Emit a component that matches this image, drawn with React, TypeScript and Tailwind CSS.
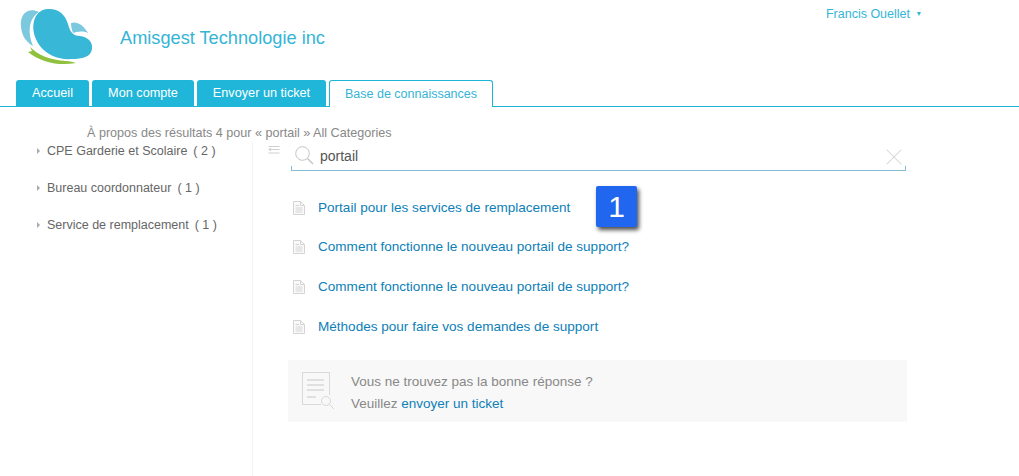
import { X } from "lucide-react";

const font = { fontFamily: '"Liberation Sans", Arial, sans-serif' };

const tabs = [
  { label: "Accueil", width: "w-[73px]" },
  { label: "Mon compte", width: "w-[102px]" },
  { label: "Envoyer un ticket", width: "w-[129px]" },
];

const categories = [
  { name: "CPE Garderie et Scolaire", count: "( 2 )" },
  { name: "Bureau coordonnateur", count: "( 1 )" },
  { name: "Service de remplacement", count: "( 1 )" },
];

const results = [
  "Portail pour les services de remplacement",
  "Comment fonctionne le nouveau portail de support?",
  "Comment fonctionne le nouveau portail de support?",
  "Méthodes pour faire vos demandes de support",
];

function Logo() {
  return (
    <svg width="74" height="58" viewBox="0 0 74 58" className="block">
      <path d="M8 3 C3 5 0 11 1 19 C2 28 6 34 13 38 C10 31 9 25 10 18 C11 12 14 7 19 4 C15 2 11 2 8 3 Z" fill="#7cc8de" />
      <path d="M27 1 C38 0 45 6 48 16 C50 24 53 28 60 28 C68 29 73 34 72 41 C71 49 62 51 52 51 C39 52 27 47 20 38 C14 30 12 21 14 13 C16 6 20 2 27 1 Z" fill="#38b7d6" />
      <path d="M51 15 C56 13 63 16 68 25 C62 22 56 24 53 25 C52 22 51 19 51 15 Z" fill="#7cc8de" />
      <path d="M10 39 C18 47 30 52 46 53 C50 53 53 54 56 55 C40 58 22 55 8 44 L12 43 Z" fill="#8fc13e" />
    </svg>
  );
}

function DocIcon() {
  return (
    <svg width="12" height="14" viewBox="0 0 12 14" fill="none" stroke="#d4d4d4" className="shrink-0">
      <path d="M0.5 0.5 H7.5 L11.5 4.5 V13.5 H0.5 Z" fill="#fafafa" />
      <path d="M7.5 0.5 V4.5 H11.5 M2.5 4.5 H6 M2.5 7 H9.5 M2.5 9 H9.5 M2.5 11 H9.5" />
    </svg>
  );
}

function TicketIcon() {
  return (
    <svg width="33" height="38" viewBox="0 0 33 38" fill="none" stroke="#d8d8d8" className="shrink-0">
      <path d="M19 32.5 H0.5 V0.5 H27.5 V23" />
      <path d="M5 8 H22 M5 13 H22 M5 18 H22 M5 25 H14" strokeWidth="1.4" />
      <circle cx="24" cy="29" r="4.5" />
      <path d="M27.5 32.5 L32 37" />
    </svg>
  );
}

function SearchGlyph() {
  return (
    <svg width="19" height="19" viewBox="0 0 19 19" fill="none" stroke="#c4c4c4" className="shrink-0">
      <circle cx="7.5" cy="7.5" r="6.8" />
      <path d="M12.5 12.5 L18 18" strokeWidth="1.4" />
    </svg>
  );
}

function IndentGlyph() {
  return (
    <svg width="12" height="8" viewBox="0 0 12 8" fill="none" stroke="#cfcfcf" className="shrink-0">
      <path d="M0.5 0.5 H11.5 M3 3.5 H11.5 M0.5 7 H11.5" />
      <path d="M0 3.5 L3 1.8 V5.2 Z" fill="#cfcfcf" stroke="none" />
    </svg>
  );
}

export default function App() {
  return (
    <div className="w-[1019px] h-[476px] overflow-hidden bg-white" style={font}>
      <header className="flex h-[80px] pl-5 pt-[8px]">
        <Logo />
        <div className="pl-[26px] pt-[19px] text-[18.2px] leading-[22px] text-[#35b5d6]">Amisgest Technologie inc</div>
        <div className="ml-auto mr-[98px] -mt-[1px] flex h-[14px] items-center gap-[7px] text-[12.5px] text-[#35b5d6]">
          Francis Ouellet
          <span className="h-0 w-0 border-x-[2.5px] border-t-[4px] border-x-transparent border-t-[#35b5d6]" />
        </div>
      </header>

      <nav className="flex h-[27px] gap-[3px] border-b border-[#1db5d8] pl-4">
        {tabs.map((tab) => (
          <div key={tab.label} className={`${tab.width} flex h-[26px] items-center justify-center rounded-t-[3px] bg-[#1fb6d9] pt-[2px] text-[12.7px] text-white`}>
            {tab.label}
          </div>
        ))}
        <div className="flex h-[27px] w-[164px] items-center justify-center rounded-t-[3px] border-x border-t border-[#1db5d8] bg-white text-[12.5px] text-[#35b5d6]">
          Base de connaissances
        </div>
      </nav>

      <div className="pl-[87px] pt-[19px] text-[12.6px] leading-[15px] text-[#888888]">
        À propos des résultats 4 pour « portail » All Categories
      </div>

      <div className="flex h-[335px]">
        <aside className="w-[253px] shrink-0 border-r border-[#f4f4f4] pl-[37px] pt-[2px]">
          {categories.map((c) => (
            <div key={c.name} className="mb-[21px] flex h-[16px] items-center text-[12.5px] text-[#666666]">
              <span className="mr-[7px] h-0 w-0 border-y-[3px] border-l-[3px] border-y-transparent border-l-[#aaaaaa]" />
              <span>{c.name}</span>
              <span className="ml-[6px]">{c.count}</span>
            </div>
          ))}
        </aside>

        <main className="relative w-[653px] pl-[15px]">
          <div className="flex items-start">
            <div className="mt-[5px] w-[23px]">
              <IndentGlyph />
            </div>
            <div className="flex h-[30px] w-[615px] items-center border-x border-b border-[#86bcd3] pl-[3px] pr-[4px] [border-image:linear-gradient(to_bottom,transparent_85%,#86bcd3_85%)_1]">
              <SearchGlyph />
              <span className="ml-[6px] pt-[1px] text-[14px] text-[#555555]">portail</span>
              <X size={28} strokeWidth={0.9} color="#d4d4d4" className="-mr-[7px] ml-auto mt-[3px]" />
            </div>
          </div>

          <ul className="ml-[25px] mt-[21px] flex flex-col">
            {results.map((r, i) => (
              <li key={i} className={`flex h-[40px] items-center gap-[13px] pb-[10px] text-[13.55px] text-[#0d80b8] ${i === 0 ? "pt-[2px]" : ""}`}>
                <DocIcon />
                {r}
              </li>
            ))}
          </ul>

          <div className="ml-[20px] mt-[8px] flex h-[62px] w-[619px] items-center bg-[#f8f8f8] pl-[14px]">
            <TicketIcon />
            <div className="ml-[16px] pt-[4px] text-[13.5px] leading-[22px] text-[#888888]">
              <div>Vous ne trouvez pas la bonne réponse ?</div>
              <div>
                Veuillez <span className="text-[#0d80b8]">envoyer un ticket</span>
              </div>
            </div>
          </div>

          <div className="absolute left-[343px] top-[45px] flex h-[41px] w-[41px] items-center justify-center rounded-[2px] bg-[#2166ee] text-[30px] text-white shadow-[2px_3px_4px_rgba(0,0,0,0.7)]">
            1
          </div>
        </main>
      </div>
    </div>
  );
}
